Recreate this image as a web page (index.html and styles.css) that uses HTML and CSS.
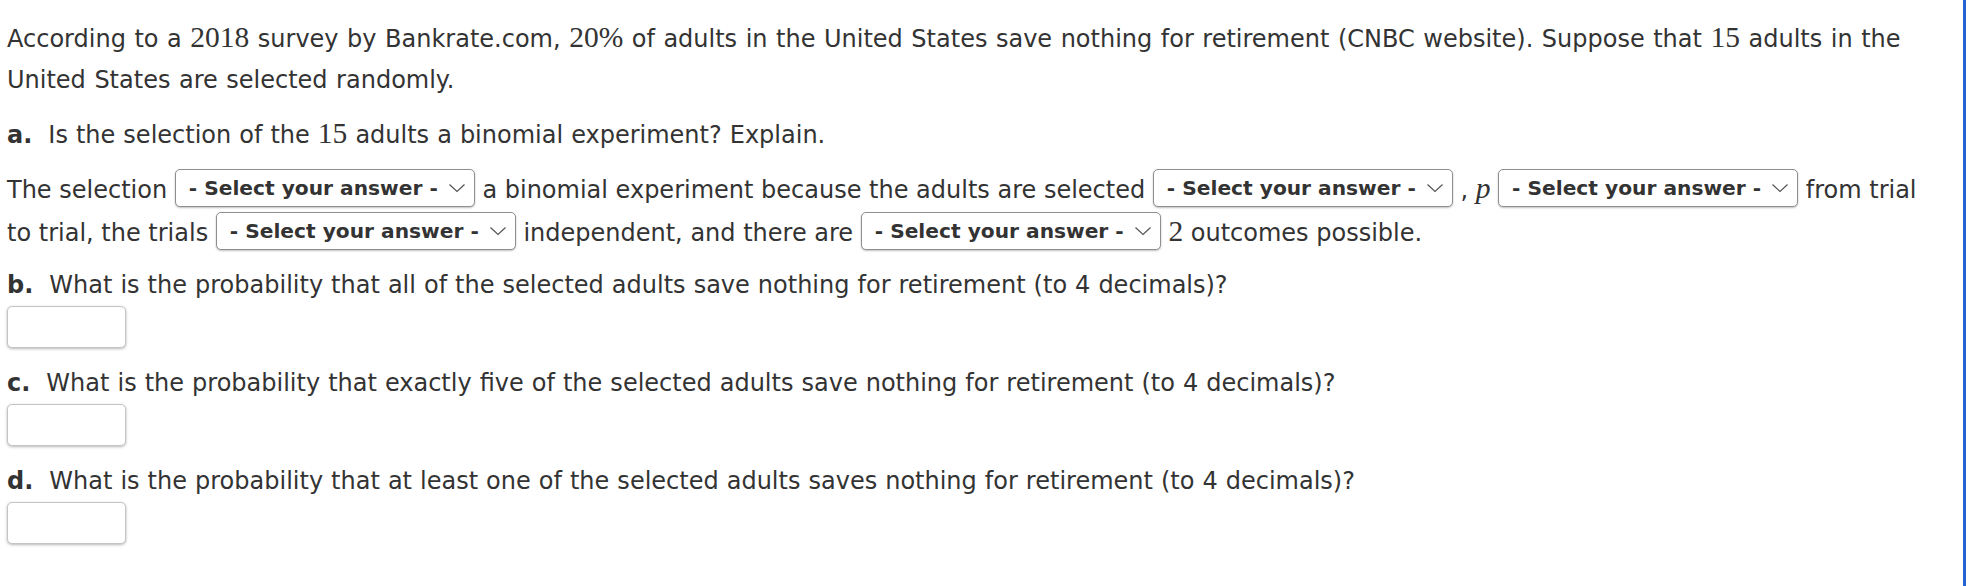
FILE: index.html
```html
<!DOCTYPE html>
<html lang="en">
<head>
<meta charset="utf-8">
<title>Binomial question</title>
<link rel="stylesheet" href="styles.css">
</head>
<body>
<div class="page">
  <div class="content">
    <p class="intro">According to a <span class="math">2018</span> survey by Bankrate.com, <span class="math">20%</span> of adults in the United States save nothing for retirement (CNBC website). Suppose that <span class="math">15</span> adults in the United States are selected randomly.</p>

    <p class="question q-a"><b class="label">a.</b> Is the selection of the <span class="math">15</span> adults a binomial experiment? Explain.</p>

    <p class="answer-line">The selection <span class="dropdown"><span class="dd-text">- Select your answer -</span><svg class="chev" viewBox="0 0 18 10" width="18" height="10"><path d="M1.5 1.5 L9 8.5 L16.5 1.5" fill="none" stroke="#555" stroke-width="1.2"/></svg></span> a binomial experiment because the adults are selected <span class="dropdown"><span class="dd-text">- Select your answer -</span><svg class="chev" viewBox="0 0 18 10" width="18" height="10"><path d="M1.5 1.5 L9 8.5 L16.5 1.5" fill="none" stroke="#555" stroke-width="1.2"/></svg></span> , <span class="math var">p</span> <span class="dropdown"><span class="dd-text">- Select your answer -</span><svg class="chev" viewBox="0 0 18 10" width="18" height="10"><path d="M1.5 1.5 L9 8.5 L16.5 1.5" fill="none" stroke="#555" stroke-width="1.2"/></svg></span> from trial to trial, the trials <span class="dropdown"><span class="dd-text">- Select your answer -</span><svg class="chev" viewBox="0 0 18 10" width="18" height="10"><path d="M1.5 1.5 L9 8.5 L16.5 1.5" fill="none" stroke="#555" stroke-width="1.2"/></svg></span> independent, and there are <span class="dropdown"><span class="dd-text">- Select your answer -</span><svg class="chev" viewBox="0 0 18 10" width="18" height="10"><path d="M1.5 1.5 L9 8.5 L16.5 1.5" fill="none" stroke="#555" stroke-width="1.2"/></svg></span> <span class="math">2</span> outcomes possible.</p>

    <p class="question"><b class="label">b.</b> What is the probability that all of the selected adults save nothing for retirement (to 4 decimals)?</p>
    <div class="input-box"></div>

    <p class="question"><b class="label">c.</b> What is the probability that exactly five of the selected adults save nothing for retirement (to 4 decimals)?</p>
    <div class="input-box"></div>

    <p class="question"><b class="label">d.</b> What is the probability that at least one of the selected adults saves nothing for retirement (to 4 decimals)?</p>
    <div class="input-box"></div>
  </div>
</div>
</body>
</html>
```

FILE: styles.css
```css
html, body {
  margin: 0;
  padding: 0;
  background: #ffffff;
}

.page {
  box-sizing: border-box;
  width: 1966px;
  min-height: 586px;
  border-right: 3px solid #2563d0;
  padding: 19px 20px 0 7px;
}

.content {
  font-family: "DejaVu Sans", Verdana, sans-serif;
  font-size: 24px;
  color: #333333;
  line-height: 41px;
  word-spacing: 0.4px;
}

p {
  margin: 0;
}

.intro {
  margin-bottom: 14px;
  word-spacing: 0.9px;
}

.q-a {
  margin-bottom: 13px;
}

.label {
  font-weight: bold;
  margin-right: 8px;
}

.math {
  font-family: "Liberation Serif", "Times New Roman", serif;
  font-size: 29.5px;
  line-height: 1;
  word-spacing: normal;
}

.var {
  font-style: italic;
}

.answer-line {
  line-height: 43px;
  margin-bottom: 10px;
  word-spacing: normal;
}

.dropdown {
  display: inline-flex;
  align-items: center;
  justify-content: space-between;
  box-sizing: border-box;
  width: 300px;
  height: 38px;
  padding: 0 8px 0 13px;
  margin-left: 0;
  vertical-align: middle;
  border: 1px solid #8f8f8f;
  border-radius: 5px;
  box-shadow: 0 1px 2px rgba(0, 0, 0, 0.25);
  background: #ffffff;
  position: relative;
  top: -3px;
  line-height: 1;
  word-spacing: normal;
}

.dd-text {
  font-weight: bold;
  font-size: 20.2px;
  color: #333333;
  white-space: nowrap;
}

.chev {
  display: block;
  flex: none;
}

.input-box {
  box-sizing: border-box;
  width: 119px;
  height: 42px;
  margin: 0 0 15px 0;
  border: 1px solid #c4c4c4;
  border-radius: 5px;
  box-shadow: 0 1px 3px rgba(0, 0, 0, 0.28);
  background: #ffffff;
}
```
